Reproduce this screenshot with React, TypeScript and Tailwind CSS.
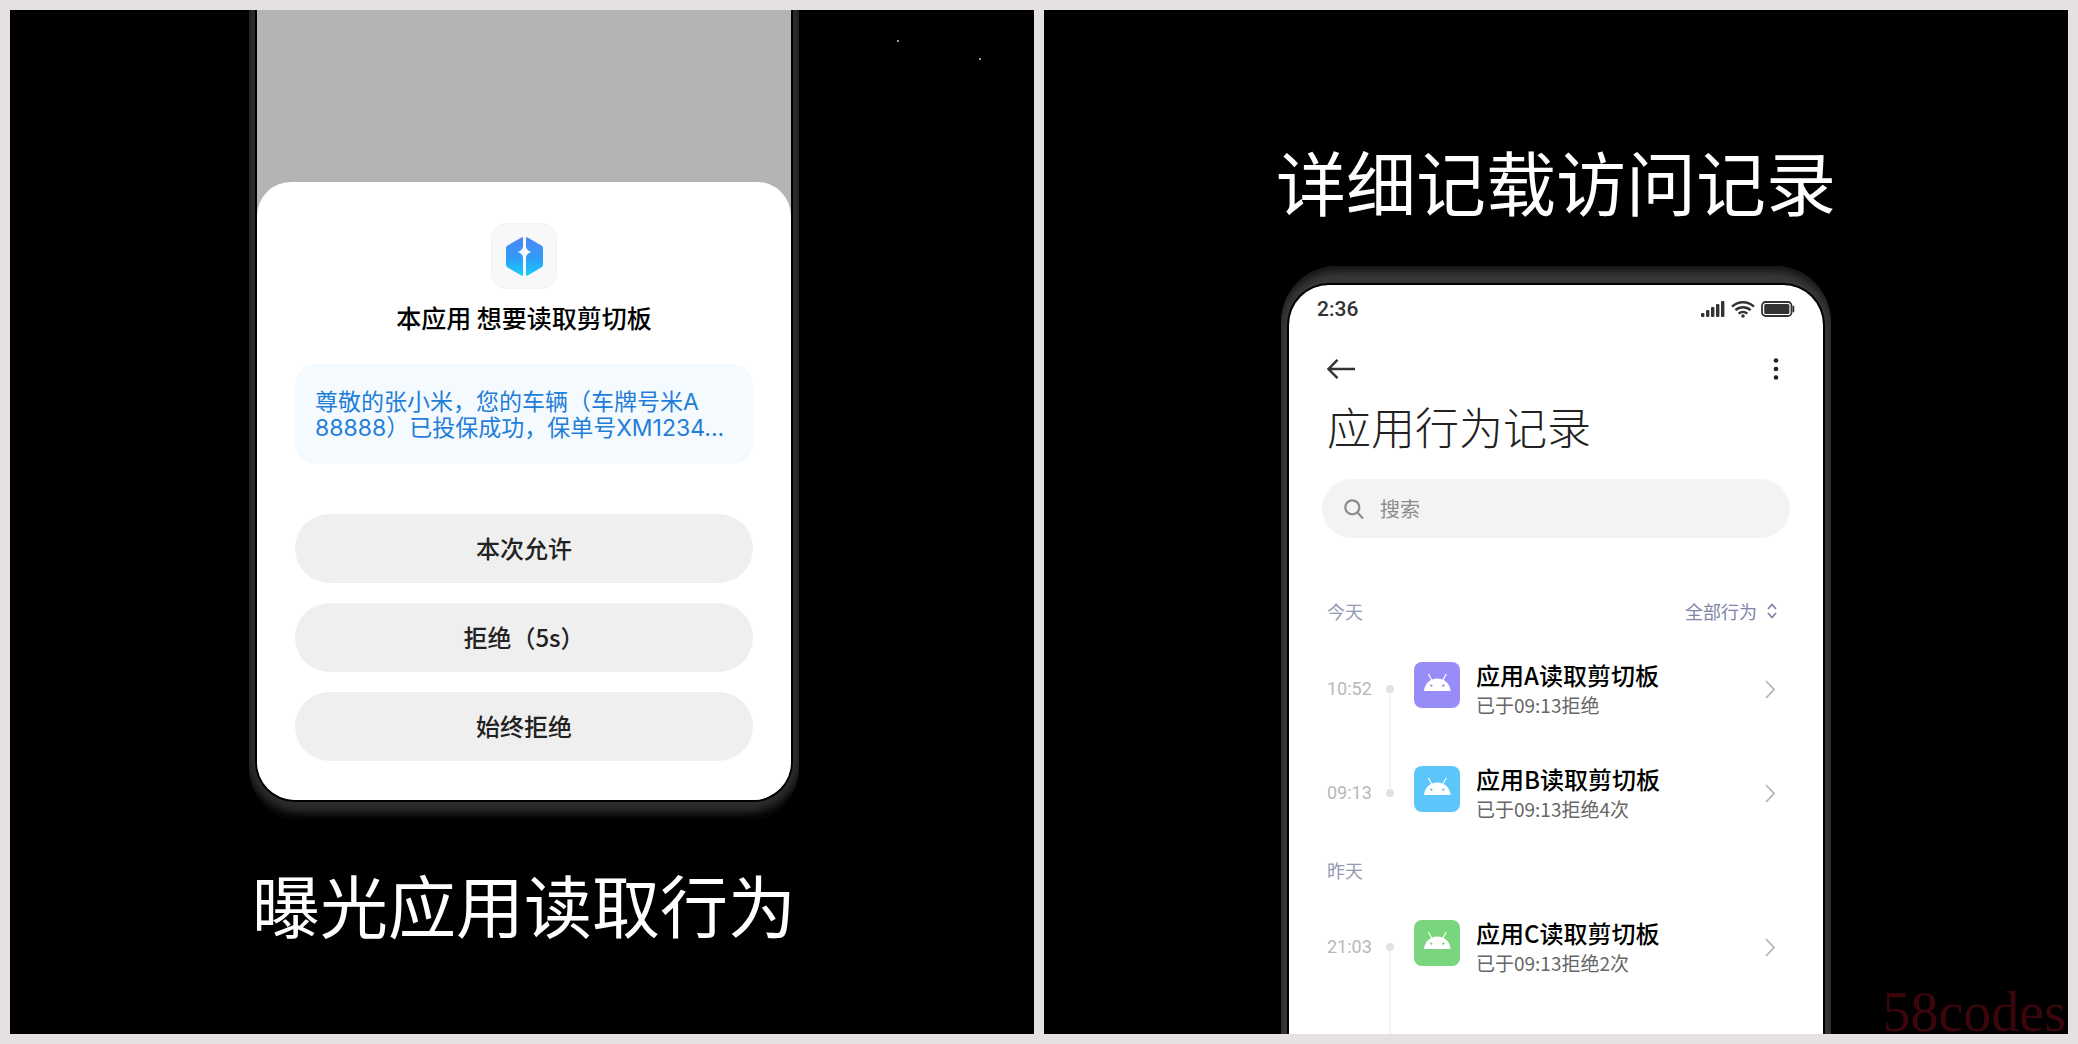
type Entry = {
    app: string
    time: string
    result: string
    tile: string
    linkUp?: boolean
    linkDown?: boolean
}

const today: Entry[] = [
    { app: '应用A', time: '10:52', result: '已于09:13拒绝', tile: 'bg-[#978cf8] text-[#978cf8]', linkDown: true },
    { app: '应用B', time: '09:13', result: '已于09:13拒绝4次', tile: 'bg-[#5cc5f9] text-[#5cc5f9]', linkUp: true },
]

const yesterday: Entry[] = [
    { app: '应用C', time: '21:03', result: '已于09:13拒绝2次', tile: 'bg-[#79d67f] text-[#79d67f]', linkDown: true },
]

const choices = ['本次允许', '拒绝（5s）', '始终拒绝']

function AppLogo() {
    return (
        <svg width="37" height="39" viewBox="0 0 37 39" aria-hidden="true">
            <defs>
                <linearGradient id="logo" x1="0" y1="0" x2="0" y2="1">
                    <stop offset="0" stopColor="#4c86f6" />
                    <stop offset="0.55" stopColor="#2f9df8" />
                    <stop offset="1" stopColor="#18cdfb" />
                </linearGradient>
            </defs>
            <path
                fill="url(#logo)"
                d="M17 1.2V10C16.2 12.6 14.6 14.3 11.5 15C14.6 15.7 16.2 17.4 17 20V37.8C17 38.8 16.2 39 15.4 38.5L1.6 30.4C.6 29.8 0 29 0 27.8V11.2C0 10 .6 9.2 1.6 8.6L15.4.5C16.2 0 17 .2 17 1.2Z"
            />
            <path
                fill="url(#logo)"
                d="M20 1.2V10C20.8 12.6 22.4 14.3 25.5 15C22.4 15.7 20.8 17.4 20 20V37.8C20 38.8 20.8 39 21.6 38.5L35.4 30.4C36.4 29.8 37 29 37 27.8V11.2C37 10 36.4 9.2 35.4 8.6L21.6.5C20.8 0 20 .2 20 1.2Z"
            />
        </svg>
    )
}

function AndroidHead() {
    return (
        <svg width="46" height="46" viewBox="0 0 46 46" aria-hidden="true">
            <path d="M14.6 12.5L18 18.5M32 12.5L28.6 18.5" stroke="#fff" strokeWidth="1.2" strokeLinecap="round" />
            <path d="M10 29C10.6 21.5 16.2 16.5 23.3 16.5S36 21.5 36.6 29Z" fill="#fff" />
            <circle cx="17.3" cy="23.6" r="1.2" fill="currentColor" />
            <circle cx="29.3" cy="23.6" r="1.2" fill="currentColor" />
        </svg>
    )
}

function StatusIcons() {
    return (
        <div className="flex items-center gap-1.5 text-[#333]">
            <svg width="24" height="16" viewBox="0 0 24 16" fill="currentColor" aria-hidden="true">
                <rect x="0" y="12" width="3.4" height="4" rx="1" />
                <rect x="5" y="9" width="3.4" height="7" rx="1" />
                <rect x="10" y="6" width="3.4" height="10" rx="1" />
                <rect x="15" y="3" width="3.4" height="13" rx="1" />
                <rect x="20" y="0" width="3.4" height="16" rx="1" />
            </svg>
            <svg width="24" height="17" viewBox="0 0 24 17" fill="none" stroke="currentColor" strokeWidth="2.4" aria-hidden="true">
                <path d="M1 5.6C7.2-.2 16.8-.2 23 5.6" />
                <path d="M4.4 9.2C8.8 5.2 15.2 5.2 19.6 9.2" />
                <path d="M7.6 12.6C10.2 10.4 13.8 10.4 16.4 12.6" />
                <circle cx="12" cy="15" r="1.8" fill="currentColor" stroke="none" />
            </svg>
            <svg width="34" height="16" viewBox="0 0 34 16" fill="none" aria-hidden="true">
                <rect x="1" y="1" width="29.5" height="14" rx="3.5" stroke="currentColor" strokeWidth="1.8" />
                <rect x="3.2" y="3" width="25.2" height="10" rx="1.5" fill="currentColor" />
                <path d="M32.4 5.6V10.4" stroke="currentColor" strokeWidth="1.8" strokeLinecap="round" />
            </svg>
        </div>
    )
}

function EntryRow({ entry }: { entry: Entry }) {
    return (
        <li>
            <a href="#" className="flex h-[104px] items-center pr-12 pl-[38px]">
                <time className="w-[59px] font-['Roboto','Noto_Sans_CJK_SC',sans-serif] text-lg text-[#b8b8b8]">{entry.time}</time>
                <span className="flex w-2 flex-col items-center self-stretch">
                    <span className={`w-0.5 flex-1 ${entry.linkUp ? 'bg-[#f3f3f3]' : ''}`} />
                    <span className="size-2 rounded-full bg-[#e2e2e2]" />
                    <span className={`w-0.5 flex-1 ${entry.linkDown ? 'bg-[#f3f3f3]' : ''}`} />
                </span>
                <span className={`mb-2 ml-5 overflow-hidden rounded-lg ${entry.tile}`}>
                    <AndroidHead />
                </span>
                <span className="ml-4 flex-1 pt-0.5">
                    <span className="block text-2xl leading-[30px] font-medium text-black">{entry.app}读取剪切板</span>
                    <span className="block text-[19px] leading-[30px] text-[#666]">{entry.result}</span>
                </span>
                <svg width="10" height="19" viewBox="0 0 10 19" fill="none" stroke="#b5b5b5" strokeWidth="1.8" aria-hidden="true">
                    <path d="M1 1L9 9.5L1 18" />
                </svg>
            </a>
        </li>
    )
}

function ClipboardPanel() {
    return (
        <section className="relative flex aspect-square flex-col items-center overflow-hidden bg-black pl-1">
            <span className="absolute top-[30px] right-[135px] size-0.5 bg-[#999]" />
            <span className="absolute top-12 right-[53px] size-0.5 bg-[#999]" />

            <div className="w-[550px] max-w-full rounded-b-[52px] bg-[#2c2c2c] px-2 pb-5 shadow-[inset_0_-10px_8px_-3px_#000]">
                <div className="overflow-hidden rounded-b-[38px] bg-[#b4b4b4] pt-[172px] ring-2 ring-black">
                    <div className="flex flex-col items-center rounded-t-[34px] bg-white px-[38px] pt-[41px] pb-[39px]">
                        <div className="flex size-[66px] items-center justify-center rounded-2xl border border-[#f3f3f3] bg-[#f8f8f8]">
                            <AppLogo />
                        </div>
                        <h2 className="mt-3 text-[25px] leading-8 font-medium text-black">本应用 想要读取剪切板</h2>

                        <p className="mt-[31px] h-[100px] w-full rounded-[20px] bg-[#f5faff] px-5 pt-[25px] font-['Inter','Noto_Sans_CJK_SC',sans-serif] text-[23px] leading-[26px] text-[#1f7ed8]">
                            尊敬的张小米，您的车辆（车牌号米A
                            <br />
                            88888）已投保成功，保单号XM1234...
                        </p>

                        <div className="mt-[50px] flex w-full flex-col gap-5">
                            {choices.map((choice) => (
                                <button key={choice} type="button" className="h-[69px] rounded-full bg-[#efefef] pb-0.5 text-2xl font-medium text-[#222]">
                                    {choice}
                                </button>
                            ))}
                        </div>
                    </div>
                </div>
            </div>

            <h1 className="mt-9 text-[68px] leading-[96px] whitespace-nowrap text-white">曝光应用读取行为</h1>
        </section>
    )
}

function HistoryPanel() {
    return (
        <section className="relative flex aspect-square flex-col items-center bg-black pt-[123px]">
            <h1 className="text-[70px] leading-[96px] whitespace-nowrap text-white">详细记载访问记录</h1>

            <div className="mt-[37px] flex w-[550px] max-w-full flex-1 flex-col overflow-hidden rounded-t-[56px] bg-[#383838] px-2 pt-[19px] shadow-[inset_0_8px_8px_-3px_#111]">
                <div className="flex flex-1 flex-col rounded-t-[40px] bg-white pt-3 ring-2 ring-black">
                    <div className="flex h-6 items-center justify-between pr-7 pl-7">
                        <span className="pt-0.5 font-['Roboto',sans-serif] text-[21px] font-medium text-[#333]">2:36</span>
                        <StatusIcons />
                    </div>

                    <div className="mt-9 flex h-6 items-center justify-between pr-11 pl-[38px]">
                        <button type="button" aria-label="返回">
                            <svg width="28" height="20" viewBox="0 0 28 20" fill="none" stroke="#333" strokeWidth="2.4" aria-hidden="true">
                                <path d="M10.5 .8L1.5 10L10.5 19.2M1.5 10H28" />
                            </svg>
                        </button>
                        <button type="button" aria-label="更多">
                            <svg width="6" height="22" viewBox="0 0 6 22" fill="#222" aria-hidden="true">
                                <circle cx="3" cy="2.5" r="2.3" />
                                <circle cx="3" cy="11" r="2.3" />
                                <circle cx="3" cy="19.5" r="2.3" />
                            </svg>
                        </button>
                    </div>

                    <h2 className="mt-[15px] pl-[38px] text-[44px] leading-[60px] font-light text-[#222]">应用行为记录</h2>

                    <label className="mx-[33px] mt-[23px] flex h-[59px] items-center gap-4 rounded-full bg-[#f3f3f3] px-[22px]">
                        <svg width="20" height="20" viewBox="0 0 20 20" fill="none" stroke="#8c8c8c" strokeWidth="2.2" aria-hidden="true">
                            <circle cx="8.3" cy="8.3" r="7" />
                            <path d="M13 13L19 19.4" />
                        </svg>
                        <input type="search" aria-label="搜索" placeholder="搜索" className="min-w-0 flex-1 bg-transparent text-xl outline-none placeholder:text-[#8c8c8c]" />
                    </label>

                    <div className="mt-[61px] flex h-6 items-center justify-between pr-[46px] pl-[38px] text-lg">
                        <h3 className="text-[#9499b5]">今天</h3>
                        <label className="flex items-center gap-2.5 text-[#7f84a8]">
                            <select aria-label="行为筛选" className="w-[72px] appearance-none bg-transparent">
                                <option>全部行为</option>
                            </select>
                            <svg width="10" height="16" viewBox="0 0 10 16" fill="none" stroke="currentColor" strokeWidth="1.8" aria-hidden="true">
                                <path d="M1 6L5 1.5L9 6M1 10L5 14.5L9 10" />
                            </svg>
                        </label>
                    </div>
                    <ul className="mt-3.5">
                        {today.map((entry) => (
                            <EntryRow key={entry.app} entry={entry} />
                        ))}
                    </ul>

                    <h3 className="mt-[13px] pl-[38px] text-lg leading-6 text-[#9499b5]">昨天</h3>
                    <ul className="mt-[13px]">
                        {yesterday.map((entry) => (
                            <EntryRow key={entry.app} entry={entry} />
                        ))}
                    </ul>
                    <div className="ml-[100px] w-0.5 flex-1 bg-[#f3f3f3]" />
                </div>
            </div>

            <span className="absolute right-0.5 bottom-0 font-['Liberation_Serif',serif] text-[56px] leading-[44px] text-[#3a060b]">58codes</span>
        </section>
    )
}

export default function App() {
    return (
        <main className="grid min-h-screen grid-cols-2 content-start gap-2.5 bg-[#e5e0e2] p-2.5 font-['Noto_Sans_CJK_SC',sans-serif]">
            <ClipboardPanel />
            <HistoryPanel />
        </main>
    )
}
